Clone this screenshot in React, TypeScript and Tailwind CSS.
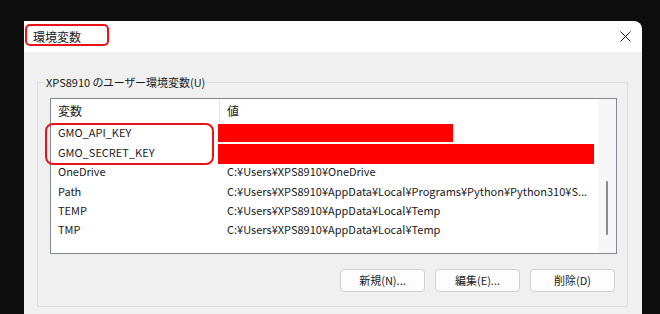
import React from "react";

const rows: { name: string; value: string }[] = [
  { name: "GMO_API_KEY", value: "" },
  { name: "GMO_SECRET_KEY", value: "" },
  { name: "OneDrive", value: "C:¥Users¥XPS8910¥OneDrive" },
  { name: "Path", value: "C:¥Users¥XPS8910¥AppData¥Local¥Programs¥Python¥Python310¥S..." },
  { name: "TEMP", value: "C:¥Users¥XPS8910¥AppData¥Local¥Temp" },
  { name: "TMP", value: "C:¥Users¥XPS8910¥AppData¥Local¥Temp" },
];

const font = { fontFamily: '"Noto Sans CJK JP", "Noto Sans", sans-serif' };

export default function App() {
  return (
    <div
      className="relative w-[660px] h-[314px] overflow-hidden bg-[#0d0d0d] pl-[24px] pt-[21px] text-[12px] text-[#1a1a1a] [font-feature-settings:'palt']"
      style={font}
    >
      <div className="w-[618px] h-[320px] flex flex-col">
        {/* title bar */}
        <div className="h-[31px] bg-white rounded-tr-[8px] flex items-center justify-between pl-[9px] pr-[10px]">
          <span className="text-[12px] leading-none">環境変数</span>
          <svg width="11" height="11" viewBox="0 0 11 11" className="mr-[1px]">
            <path d="M0.5 0.5 L10.5 10.5 M10.5 0.5 L0.5 10.5" stroke="#1a1a1a" strokeWidth="1" />
          </svg>
        </div>
        {/* body */}
        <div className="flex-1 bg-[#f0f0f0] pl-[13px] pr-[14px] pt-[22px]">
          <fieldset className="min-w-0 w-[591px] border border-[#dcdcdc] px-[12px] pb-[14px] pt-[8px]">
            <legend className="ml-[-6px] px-[2px] leading-[16px] text-[11px]">
              XPS8910 のユーザー環境変数(U)
            </legend>
            <div className="w-[567px] h-[156px] border border-[#828790] bg-white flex overflow-hidden">
              <div className="flex-1 min-w-0 flex flex-col">
                <div className="h-[24px] flex">
                  <div className="w-[168px] pl-[7px] flex items-center">変数</div>
                  <div className="w-px bg-[#e5e5e5]" />
                  <div className="pl-[7px] flex items-center">値</div>
                </div>
                {rows.map((r) => (
                  <div key={r.name} className="h-[19.4px] flex items-center text-[11px]">
                    <div className="w-[169px] shrink-0 pl-[7px] whitespace-nowrap">{r.name}</div>
                    <div className="pl-[7px] whitespace-nowrap">{r.value}</div>
                  </div>
                ))}
              </div>
              <div className="w-[18px] shrink-0 bg-[#f7f7f7] flex justify-center">
                <div className="mt-[82px] w-[2px] h-[54px] rounded-full bg-[#8a8a8a]" />
              </div>
            </div>
            <div className="mt-[15px] flex justify-end gap-[10px]">
              {["新規(N)...", "編集(E)...", "削除(D)"].map((b) => (
                <button
                  key={b}
                  className="w-[85px] h-[23px] rounded-[4px] border border-[#d0d0d0] bg-[#fdfdfd] text-[11px] text-[#1a1a1a] flex items-center justify-center [font-feature-settings:'palt']"
                  style={font}
                >
                  {b}
                </button>
              ))}
            </div>
          </fieldset>
        </div>
      </div>

      {/* redactions */}
      <div className="absolute left-[218px] top-[124px] w-[235px] h-[18px] bg-[#ff0000]" />
      <div className="absolute left-[218px] top-[144px] w-[376px] h-[20px] bg-[#ff0000]" />
      {/* annotations */}
      <div className="absolute left-[25px] top-[24px] w-[84px] h-[22px] border-2 border-[#e8141c] rounded-[5px]" />
      <div className="absolute left-[45px] top-[123px] w-[169px] h-[42px] border-2 border-[#e8141c] rounded-[8px]" />
    </div>
  );
}
